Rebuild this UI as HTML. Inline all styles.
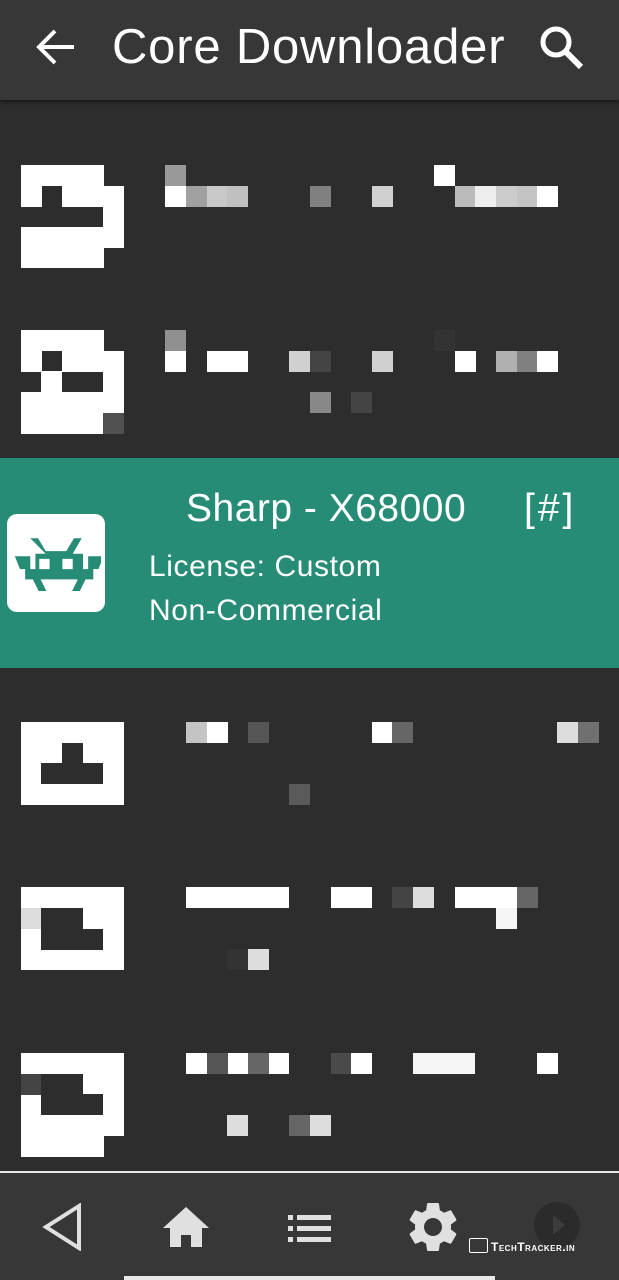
<!DOCTYPE html>
<html><head><meta charset="utf-8"><style>
*{margin:0;padding:0;box-sizing:border-box}
body{width:619px;height:1280px;background:#2d2d2d;position:relative;overflow:hidden;font-family:"Liberation Sans",sans-serif;color:#fff}
.c{position:absolute;width:21px;height:21px}
.w{background:#fff}
.t{position:absolute;white-space:nowrap}
</style></head><body>
<div style="position:absolute;left:0;top:0;width:619px;height:100px;background:#373737;box-shadow:0 2px 4px rgba(0,0,0,.5)"></div>
<svg style="position:absolute;left:34px;top:26px" width="44" height="42" viewBox="0 0 44 42"><path d="M40 21H6M21 5L5 21l16 16" stroke="#fff" stroke-width="4" fill="none"/></svg>
<div class="t" style="left:112px;top:19px;font-size:49px;letter-spacing:0.8px">Core Downloader</div>
<svg style="position:absolute;left:536px;top:22px" width="54" height="52" viewBox="0 0 54 52"><circle cx="20" cy="20" r="13" stroke="#fff" stroke-width="5" fill="none"/><path d="M30 30l15 15" stroke="#fff" stroke-width="6"/></svg>

<div class="c w" style="left:21px;top:165px;width:83px"></div>
<div class="c w" style="left:21px;top:186px"></div>
<div class="c w" style="left:62px;top:186px;width:62px"></div>
<div class="c w" style="left:103px;top:206px"></div>
<div class="c w" style="left:21px;top:227px;width:103px"></div>
<div class="c w" style="left:21px;top:247px;width:83px"></div>
<div class="c" style="left:165px;top:165px;background:#999"></div>
<div class="c w" style="left:165px;top:186px"></div>
<div class="c" style="left:186px;top:186px;background:#a0a0a0"></div>
<div class="c" style="left:207px;top:186px;background:#c8c8c8"></div>
<div class="c" style="left:227px;top:186px;background:#c0c0c0"></div>
<div class="c" style="left:310px;top:186px;background:#808080"></div>
<div class="c" style="left:372px;top:186px;background:#d0d0d0"></div>
<div class="c w" style="left:434px;top:165px"></div>
<div class="c" style="left:455px;top:186px;background:#bbb"></div>
<div class="c" style="left:475px;top:186px;background:#eee"></div>
<div class="c" style="left:496px;top:186px;background:#ccc"></div>
<div class="c" style="left:517px;top:186px;background:#c4c4c4"></div>
<div class="c w" style="left:537px;top:186px"></div>

<div class="c w" style="left:21px;top:330px;width:83px"></div>
<div class="c w" style="left:21px;top:351px"></div>
<div class="c w" style="left:62px;top:351px;width:62px"></div>
<div class="c w" style="left:41px;top:371px"></div>
<div class="c w" style="left:103px;top:371px"></div>
<div class="c w" style="left:21px;top:392px;width:103px"></div>
<div class="c w" style="left:21px;top:413px;width:83px"></div>
<div class="c" style="left:103px;top:413px;background:#505050"></div>
<div class="c" style="left:165px;top:330px;background:#909090"></div>
<div class="c" style="left:434px;top:330px;background:#333"></div>
<div class="c w" style="left:165px;top:351px"></div>
<div class="c w" style="left:207px;top:351px;width:41px"></div>
<div class="c" style="left:289px;top:351px;background:#d0d0d0"></div>
<div class="c" style="left:310px;top:351px;background:#444"></div>
<div class="c" style="left:372px;top:351px;background:#d0d0d0"></div>
<div class="c w" style="left:455px;top:351px"></div>
<div class="c" style="left:496px;top:351px;background:#b0b0b0"></div>
<div class="c" style="left:517px;top:351px;background:#808080"></div>
<div class="c w" style="left:537px;top:351px"></div>
<div class="c" style="left:310px;top:392px;background:#888"></div>
<div class="c" style="left:351px;top:392px;background:#444"></div>

<div style="position:absolute;left:0;top:458px;width:619px;height:210px;background:#268c76"></div>
<div style="position:absolute;left:7px;top:514px;width:98px;height:98px;background:#fff;border-radius:10px"></div>
<svg style="position:absolute;left:11px;top:537px" width="90" height="54" viewBox="13 3 66 42">
<path fill="#268c76" d="M26 4l6 0 6 10h16l6-10h6l-7 12h8v12h4v-10h12l-4 10h-4v8h-6l-6 12h-6l6-12H34l6 12h-6l-6-12h-6v-8h-4l-4-10h12v10h4V16h8z"/>
<rect x="33" y="20" width="8" height="8" fill="#fff"/><rect x="51" y="20" width="8" height="8" fill="#fff"/>
</svg>
<div class="t" style="left:186px;top:487px;font-size:39px;letter-spacing:0.5px">Sharp - X68000</div>
<div class="t" style="left:524px;top:487px;font-size:39px;letter-spacing:3px">[#]</div>
<div class="t" style="left:149px;top:550px;font-size:30px;letter-spacing:0.6px">License: Custom</div>
<div class="t" style="left:149px;top:594px;font-size:30px;letter-spacing:0.6px">Non-Commercial</div>

<div class="c w" style="left:21px;top:722px;width:103px;height:83px"></div>
<div class="c" style="left:62px;top:743px;background:#2d2d2d"></div>
<div class="c" style="left:41px;top:763px;width:62px;background:#2d2d2d"></div>
<div class="c" style="left:186px;top:722px;background:#c4c4c4"></div>
<div class="c w" style="left:207px;top:722px"></div>
<div class="c" style="left:248px;top:722px;background:#555"></div>
<div class="c w" style="left:372px;top:722px"></div>
<div class="c" style="left:392px;top:722px;background:#666"></div>
<div class="c" style="left:557px;top:722px;background:#ddd"></div>
<div class="c" style="left:578px;top:722px;background:#707070"></div>
<div class="c" style="left:289px;top:784px;background:#5a5a5a"></div>

<div class="c w" style="left:21px;top:887px;width:103px;height:83px"></div>
<div class="c" style="left:21px;top:908px;background:#ddd"></div>
<div class="c" style="left:41px;top:908px;width:42px;background:#2d2d2d"></div>
<div class="c" style="left:41px;top:929px;width:62px;background:#2d2d2d"></div>
<div class="c w" style="left:186px;top:887px;width:103px"></div>
<div class="c w" style="left:331px;top:887px;width:41px"></div>
<div class="c" style="left:392px;top:887px;background:#444"></div>
<div class="c" style="left:413px;top:887px;background:#ddd"></div>
<div class="c w" style="left:455px;top:887px;width:62px"></div>
<div class="c" style="left:517px;top:887px;background:#666"></div>
<div class="c" style="left:496px;top:908px;background:#f5f5f5"></div>
<div class="c" style="left:227px;top:949px;background:#333"></div>
<div class="c" style="left:248px;top:949px;background:#ddd"></div>

<div class="c w" style="left:21px;top:1053px;width:103px;height:83px"></div>
<div class="c" style="left:21px;top:1074px;background:#444"></div>
<div class="c" style="left:41px;top:1074px;width:42px;background:#2d2d2d"></div>
<div class="c" style="left:41px;top:1094px;width:62px;background:#2d2d2d"></div>
<div class="c w" style="left:21px;top:1136px;width:83px"></div>
<div class="c w" style="left:186px;top:1053px;width:103px"></div>
<div class="c" style="left:207px;top:1053px;background:#555"></div>
<div class="c" style="left:248px;top:1053px;background:#666"></div>
<div class="c" style="left:331px;top:1053px;background:#4a4a4a"></div>
<div class="c w" style="left:351px;top:1053px"></div>
<div class="c" style="left:413px;top:1053px;width:62px;background:#f6f6f6"></div>
<div class="c w" style="left:537px;top:1053px"></div>
<div class="c" style="left:227px;top:1115px;background:#ddd"></div>
<div class="c" style="left:289px;top:1115px;background:#666"></div>
<div class="c" style="left:310px;top:1115px;background:#ddd"></div>

<div style="position:absolute;left:0;top:1171px;width:619px;height:109px;background:#373737;border-top:2px solid #e8e8e8"></div>
<svg style="position:absolute;left:42px;top:1203px" width="40" height="48" viewBox="0 0 40 48"><path d="M37 3L4 24l33 21z" stroke="#e0e0e0" stroke-width="4" fill="none"/></svg>
<svg style="position:absolute;left:162px;top:1206px" width="48" height="42" viewBox="0 0 48 42"><path d="M24 1L1 22h7v19h11V29h10v12h11V22h7z" fill="#e0e0e0"/></svg>
<svg style="position:absolute;left:287px;top:1214px" width="46" height="30" viewBox="0 0 46 30"><g fill="#e0e0e0"><rect x="1" y="1" width="5" height="5"/><rect x="10" y="1" width="34" height="5"/><rect x="1" y="12" width="5" height="5"/><rect x="10" y="12" width="34" height="5"/><rect x="1" y="23" width="5" height="5"/><rect x="10" y="23" width="34" height="5"/></g></svg>
<svg style="position:absolute;left:409px;top:1203px" width="48" height="48" viewBox="2.6 2.4 18.8 19.2"><path fill="#e0e0e0" d="M19.14 12.94c.04-.3.06-.61.06-.94 0-.32-.02-.64-.07-.94l2.03-1.58a.49.49 0 00.12-.61l-1.92-3.32a.488.488 0 00-.59-.22l-2.39.96c-.5-.38-1.03-.7-1.62-.94l-.36-2.54a.484.484 0 00-.48-.41h-3.84c-.24 0-.43.17-.47.41l-.36 2.54c-.59.24-1.13.57-1.62.94l-2.39-.96c-.22-.08-.47 0-.59.22L2.74 8.87c-.12.21-.08.47.12.61l2.03 1.58c-.05.3-.09.63-.09.94s.02.64.07.94l-2.03 1.58a.49.49 0 00-.12.61l1.92 3.32c.12.22.37.29.59.22l2.39-.96c.5.38 1.03.7 1.62.94l.36 2.54c.05.24.24.41.48.41h3.84c.24 0 .44-.17.47-.41l.36-2.54c.59-.24 1.130-.56 1.62-.94l2.39.96c.22.08.47 0 .59-.22l1.92-3.32c.12-.22.07-.47-.12-.61l-2.01-1.58zM12 15.6c-1.98 0-3.6-1.62-3.6-3.6s1.62-3.6 3.6-3.6 3.6 1.62 3.6 3.6-1.62 3.6-3.6 3.6z"/></svg>
<svg style="position:absolute;left:533px;top:1201px" width="48" height="48" viewBox="0 0 48 48"><circle cx="24" cy="24" r="23" fill="#2b2b2b"/><path d="M20 14l12 10-12 10z" fill="#3c3c3c"/></svg>
<div style="position:absolute;left:469px;top:1238px;width:19px;height:15px;border:1.5px solid #fff;border-radius:2px"></div>
<div class="t" style="left:491px;top:1240px;font-size:12px;font-weight:bold;font-variant:small-caps;letter-spacing:0.5px">TechTracker.in</div>
<div style="position:absolute;left:124px;top:1276px;width:371px;height:4px;background:#e8e8e8"></div>
</body></html>
